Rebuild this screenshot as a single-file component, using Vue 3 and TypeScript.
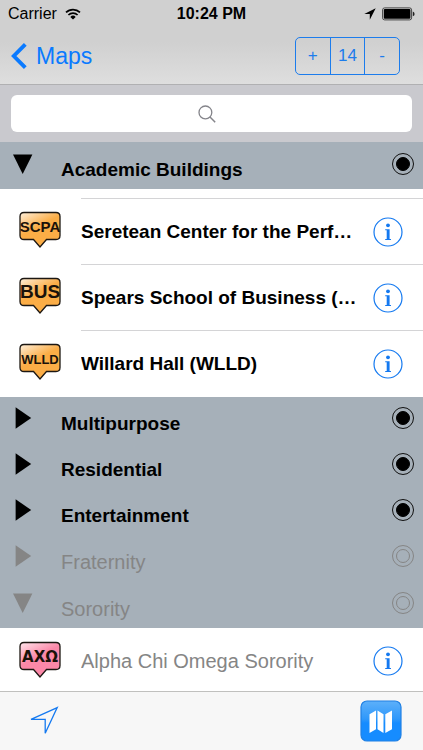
<script setup lang="ts">
import { reactive, ref } from 'vue'

interface Place {
  name: string
  code: string
  size: 'small' | 'medium' | 'large' | 'greek'
  tone: 'orange' | 'pink'
}

interface Category {
  name: string
  open: boolean
  shown: boolean
  ruled: boolean
  places: Place[]
}

const query = ref('')
const zoomLevel = ref(14)

const categories = reactive<Category[]>([
  {
    name: 'Academic Buildings',
    open: true,
    shown: true,
    ruled: true,
    places: [
      { name: 'Seretean Center for the Perf…', code: 'SCPA', size: 'medium', tone: 'orange' },
      { name: 'Spears School of Business (…', code: 'BUS', size: 'large', tone: 'orange' },
      { name: 'Willard Hall (WLLD)', code: 'WLLD', size: 'small', tone: 'orange' },
    ],
  },
  { name: 'Multipurpose', open: false, shown: true, ruled: false, places: [] },
  { name: 'Residential', open: false, shown: true, ruled: false, places: [] },
  { name: 'Entertainment', open: false, shown: true, ruled: false, places: [] },
  { name: 'Fraternity', open: false, shown: false, ruled: false, places: [] },
  {
    name: 'Sorority',
    open: true,
    shown: false,
    ruled: false,
    places: [{ name: 'Alpha Chi Omega Sorority', code: 'ΑΧΩ', size: 'greek', tone: 'pink' }],
  },
])
</script>

<template>
  <div class="screen">
    <header class="top">
      <div class="status">
        <div class="status-side">
          <span>Carrier</span>
          <svg class="wifi" viewBox="0 0 16 12" width="16" height="12" aria-hidden="true">
            <path d="M1 4.4a10 10 0 0 1 14 0M3.4 7a6.6 6.6 0 0 1 9.2 0" fill="none" stroke="#000" stroke-width="1.7" />
            <path d="M8 11.6 5.3 8.9a3.9 3.9 0 0 1 5.4 0z" fill="#000" />
          </svg>
        </div>
        <strong class="clock">10:24 PM</strong>
        <div class="status-side right">
          <svg viewBox="0 0 12 12" width="12" height="12" aria-hidden="true">
            <path d="M11.7.3.3 6h5.5v5.7z" fill="#000" />
          </svg>
          <svg viewBox="0 0 33 14" width="33" height="14" aria-hidden="true">
            <rect x=".6" y=".9" width="29" height="12" rx="2" fill="none" stroke="#444" />
            <rect x="1.8" y="2" width="26.6" height="9.8" rx="1" fill="#000" />
            <path d="M30.8 4.6q1.8.6 1.8 2.3t-1.8 2.3z" fill="#222" />
          </svg>
        </div>
      </div>
      <nav class="nav">
        <a class="back" href="#maps">
          <svg viewBox="0 0 16 26" width="16" height="26" aria-hidden="true">
            <path d="M14.3 1.4 2.8 13l11.500 11.6" fill="none" stroke="#0a7aff" stroke-width="3.900" />
          </svg>
          <span>Maps</span>
        </a>
        <div class="zoom">
          <button type="button" @click="zoomLevel++">+</button>
          <button type="button">{{ zoomLevel }}</button>
          <button type="button" @click="zoomLevel--">-</button>
        </div>
      </nav>
    </header>

    <div class="search">
      <input v-model="query" class="search-field" type="text" aria-label="Search" />
      <svg v-if="!query" class="search-icon" viewBox="0 0 18 18" width="18" height="18" aria-hidden="true">
        <circle cx="7.4" cy="7.4" r="6.4" fill="none" stroke="#84848a" stroke-width="1.3" />
        <path d="m12 12 5.2 5.2" stroke="#84848a" stroke-width="1.5" />
      </svg>
    </div>

    <main class="list">
      <section v-for="cat in categories" :key="cat.name" :class="{ off: !cat.shown }">
        <div class="head" :class="{ open: cat.open }">
          <button class="toggle" type="button" :aria-expanded="cat.open" @click="cat.open = !cat.open">
            <svg viewBox="0 0 22 22" width="22" height="22" aria-hidden="true">
              <path v-if="cat.open" d="M1 1.500h19.400L10.700 21z" fill="currentColor" />
              <path v-else d="M3.600.2v21.600L19.200 11z" fill="currentColor" />
            </svg>
            <span class="title">{{ cat.name }}</span>
          </button>
          <input v-model="cat.shown" class="dot" type="checkbox" :aria-label="cat.name" />
        </div>
        <ul v-if="cat.open && cat.places.length" class="places" :class="{ ruled: cat.ruled }">
          <li v-for="place in cat.places" :key="place.code" class="place">
            <svg class="badge" viewBox="0 0 42 38" width="42" height="38" aria-hidden="true">
              <defs>
                <linearGradient :id="'fill-' + place.code" x1="0" y1="0" x2=".6" y2="1">
                  <stop offset="0" :class="['light', place.tone]" />
                  <stop offset=".5" :class="['deep', place.tone]" />
                  <stop offset="1" :class="['deep', place.tone]" />
                </linearGradient>
              </defs>
              <path
                d="M5 1.500h32q4 0 4 4v19q0 4-4 4H27.500l-6.500 7.500-6.500-7.500H5q-4 0-4-4v-19q0-4 4-4z"
                :fill="`url(#fill-${place.code})`"
                stroke="#1c1712"
                stroke-width="1.300"
              />
              <text x="21" y="21" text-anchor="middle" :class="['code', place.size]">{{ place.code }}</text>
            </svg>
            <div class="body">
              <span class="name">{{ place.name }}</span>
              <button class="info" type="button" :aria-label="place.name">
                <svg viewBox="0 0 30 30" width="30" height="30" aria-hidden="true">
                  <circle cx="15" cy="15" r="14" fill="none" stroke="#1479f0" stroke-width="1.200" />
                  <circle cx="15" cy="8.300" r="1.900" fill="#1479f0" />
                  <path d="M12.200 12.200h4.400v9.800h1.400v1H12.200v-1h1.500v-8.800h-1.500z" fill="#1479f0" />
                </svg>
              </button>
            </div>
          </li>
        </ul>
      </section>
    </main>

    <footer class="toolbar">
      <button class="tool" type="button" aria-label="Current location">
        <svg viewBox="0 0 30 30" width="30" height="30" aria-hidden="true">
          <path d="M28.200 1.600 2 13.300h14.200v13.900z" fill="none" stroke="#1479f0" stroke-width="1.300" />
        </svg>
      </button>
      <button class="tool" type="button" aria-label="Map">
        <svg viewBox="0 0 42 42" width="42" height="42" aria-hidden="true">
          <defs>
            <linearGradient id="map-fill" x1="0" y1="0" x2="0" y2="1">
              <stop offset="0" stop-color="#5db0fa" />
              <stop offset=".45" stop-color="#2f98fb" />
              <stop offset=".55" stop-color="#168cff" />
              <stop offset="1" stop-color="#168cff" />
            </linearGradient>
          </defs>
          <rect x="1" y="1" width="40" height="40" rx="6" fill="url(#map-fill)" stroke="#2080e4" stroke-width="1.200" />
          <path d="m9.500 14.200 6.500-3.700v18.700l-6.500 3.900zM17.500 10.500l6 3.700v18.900l-6-3.900zM25.300 14.200l6.700-3.700v18.700l-6.700 3.900z" fill="#fff" />
        </svg>
      </button>
    </footer>
  </div>
</template>

<style>
body {
  margin: 0;
}
</style>

<style scoped>
.screen {
  display: flex;
  flex-direction: column;
  height: 100vh;
  overflow: hidden;
  background: #fff;
  color: #000;
  font-family: "Liberation Sans", Arial, sans-serif;
}

button {
  padding: 0;
  border: 0;
  background: none;
  color: inherit;
  font: inherit;
  cursor: pointer;
}

svg {
  display: block;
  flex: none;
}

.top {
  flex: none;
  border-bottom: 1px solid #b0b0b2;
  background: linear-gradient(#d0d0d0 50%, #dedede);
}

.status {
  display: grid;
  grid-template-columns: 1fr auto 1fr;
  align-items: center;
  height: 28px;
  padding: 0 8px;
  font-size: 16px;
}

.status-side {
  display: flex;
  align-items: center;
  gap: 8px;
}

.right {
  justify-content: flex-end;
  gap: 6px;
}

.clock {
  font-size: 16px;
  font-weight: 700;
}

.nav {
  display: flex;
  align-items: center;
  justify-content: space-between;
  height: 56px;
  padding: 0 23px 0 11px;
}

.back {
  display: flex;
  align-items: center;
  gap: 9px;
  color: #0a7aff;
  font-size: 23px;
  text-decoration: none;
}

.zoom {
  display: flex;
  box-sizing: border-box;
  width: 105px;
  height: 38px;
  border: 1px solid #1c7cec;
  border-radius: 5px;
  color: #1c7cec;
  font-size: 17px;
}

.zoom button {
  flex: 1;
}

.zoom button + button {
  border-left: 1px solid #1c7cec;
}

.search {
  display: grid;
  flex: none;
  align-items: center;
  padding: 10px 11px;
  background: #c9c9ce;
}

.search-field {
  grid-area: 1 / 1;
  box-sizing: border-box;
  width: 100%;
  height: 37px;
  padding: 0 12px;
  border: 0;
  border-radius: 6px;
  background: #fff;
  font: inherit;
}

.search-icon {
  grid-area: 1 / 1;
  justify-self: center;
  margin-right: 10px;
  pointer-events: none;
}

.list {
  flex: 1;
  min-height: 0;
  overflow: hidden;
}

.head {
  display: flex;
  align-items: flex-start;
  box-sizing: border-box;
  height: 46px;
  padding: 10px 9px 0 12px;
  background: #a6b0b9;
}

.head.open {
  height: 47px;
  padding-top: 11px;
}

.toggle {
  display: flex;
  flex: 1;
  gap: 27px;
  text-align: left;
}

.title {
  padding-top: 4px;
  line-height: 26px;
}

.title,
.name {
  font-size: 19px;
  font-weight: 700;
}

.off .title,
.off .name {
  color: #858585;
  font-size: 20px;
  font-weight: 400;
}

.off .toggle {
  color: #858585;
}

.dot {
  display: grid;
  place-items: center;
  box-sizing: border-box;
  width: 22px;
  height: 22px;
  margin: 0;
  border: 1px solid #858585;
  border-radius: 50%;
  appearance: none;
}

.dot::before {
  box-sizing: border-box;
  width: 14px;
  height: 14px;
  border: 1px solid #858585;
  border-radius: 50%;
  content: "";
}

.dot:checked {
  border-color: #111;
}

.dot:checked::before {
  border-color: #000;
  background: #000;
}

.places {
  margin: 0;
  padding: 0;
  list-style: none;
}

.ruled {
  padding: 9px 0 1px;
}

.place {
  display: flex;
  align-items: center;
  gap: 20px;
  height: 66px;
  padding-left: 19px;
}

.body {
  display: flex;
  flex: 1;
  align-items: center;
  gap: 8px;
  box-sizing: border-box;
  height: 66px;
  min-width: 0;
  padding-right: 20px;
}

.ruled .body {
  border-top: 1px solid #d4d4d6;
}

.name {
  flex: 1;
  overflow: hidden;
  line-height: 28px;
  text-overflow: ellipsis;
  white-space: nowrap;
}

.badge {
  margin-bottom: 3px;
}

.code {
  fill: #1a120a;
  font-weight: 700;
}

.code.small {
  font-size: 13px;
}

.code.medium {
  font-size: 15px;
}

.code.large {
  font-size: 19px;
}

.code.greek {
  font-family: "DejaVu Sans", sans-serif;
  font-size: 15px;
}

.light.orange {
  stop-color: #fff0dc;
}

.deep.orange {
  stop-color: #fbad46;
}

.light.pink {
  stop-color: #ffe6ec;
}

.deep.pink {
  stop-color: #fb88a8;
}

.toolbar {
  display: flex;
  flex: none;
  align-items: center;
  justify-content: space-between;
  box-sizing: border-box;
  height: 59px;
  padding: 0 21px 0 29px;
  border-top: 1px solid #c0c0be;
  background: #f7f7f7;
}
</style>
